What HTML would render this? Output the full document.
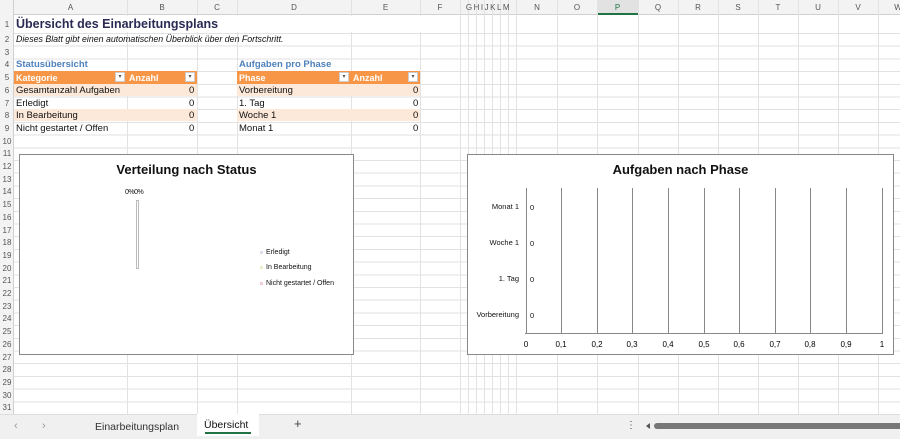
<!DOCTYPE html><html><head><meta charset="utf-8"><style>
*{margin:0;padding:0;box-sizing:border-box}
body{width:900px;height:439px;overflow:hidden;background:#fff;font-family:"Liberation Sans",sans-serif;position:relative}
.a{position:absolute}
.vl{position:absolute;top:0;width:1px;height:414px;background:#e2e2e2}
.ch{position:absolute;top:0;height:15px;font-size:8px;color:#555;text-align:center;line-height:16px}
.rh{position:absolute;left:0;width:14px;font-size:8px;color:#555;text-align:center;line-height:13px}
.c{position:absolute;font-size:9.5px;line-height:12px;white-space:nowrap;color:#111}
.fb{position:absolute;width:10px;height:10px;background:#fff;border:1px solid #ccc;font-size:6px;text-align:center;line-height:8px;color:#555}
.gl{position:absolute;top:188px;width:1px;height:145px;background:#888}
.xl{position:absolute;top:340px;font-size:8px;width:20px;text-align:center;margin-left:-10px}
</style></head><body>
<div class="a" style="left:0;top:33px;width:900px;height:381px;background:repeating-linear-gradient(to bottom,#e2e2e2 0,#e2e2e2 1px,transparent 1px,transparent 12.7px)"></div>
<div class="a" style="left:0;top:0;width:900px;height:15px;background:#f3f3f3;border-bottom:1px solid #d0d0d0"></div>
<div class="a" style="left:0;top:0;width:14px;height:414px;background:#f3f3f3;border-right:1px solid #d0d0d0"></div>
<div class="a" style="left:597px;top:0;width:41px;height:15px;background:#e2e2e2;border-bottom:2px solid #217346"></div>
<div class="vl" style="left:127px"></div><div class="vl" style="left:197px"></div><div class="vl" style="left:237px"></div><div class="vl" style="left:351px"></div><div class="vl" style="left:420px"></div><div class="vl" style="left:460px"></div><div class="vl" style="left:468px"></div><div class="vl" style="left:476px"></div><div class="vl" style="left:484px"></div><div class="vl" style="left:492px"></div><div class="vl" style="left:500px"></div><div class="vl" style="left:508px"></div><div class="vl" style="left:516px"></div><div class="vl" style="left:557px"></div><div class="vl" style="left:597px"></div><div class="vl" style="left:638px"></div><div class="vl" style="left:678px"></div><div class="vl" style="left:718px"></div><div class="vl" style="left:758px"></div><div class="vl" style="left:798px"></div><div class="vl" style="left:838px"></div><div class="vl" style="left:878px"></div>
<div class="ch" style="left:14px;width:113px">A</div><div class="ch" style="left:127px;width:70px">B</div><div class="ch" style="left:197px;width:40px">C</div><div class="ch" style="left:237px;width:114px">D</div><div class="ch" style="left:351px;width:69px">E</div><div class="ch" style="left:420px;width:40px">F</div>
<div class="ch" style="left:460px;width:57px;letter-spacing:1.5px">GHIJKLM</div><div class="ch" style="left:517px;width:40px">N</div><div class="ch" style="left:557px;width:40px">O</div><div class="ch" style="left:597px;width:41px;color:#217346">P</div><div class="ch" style="left:638px;width:40px">Q</div><div class="ch" style="left:678px;width:40px">R</div><div class="ch" style="left:718px;width:40px">S</div><div class="ch" style="left:758px;width:40px">T</div><div class="ch" style="left:798px;width:40px">U</div><div class="ch" style="left:838px;width:40px">V</div><div class="ch" style="left:878px;width:40px">W</div>
<div class="rh" style="top:18px">1</div>
<div class="rh" style="top:33px">2</div><div class="rh" style="top:45.7px">3</div><div class="rh" style="top:58.4px">4</div><div class="rh" style="top:71.1px">5</div><div class="rh" style="top:83.8px">6</div><div class="rh" style="top:96.5px">7</div><div class="rh" style="top:109.2px">8</div><div class="rh" style="top:121.9px">9</div><div class="rh" style="top:134.6px">10</div><div class="rh" style="top:147.3px">11</div><div class="rh" style="top:160px">12</div><div class="rh" style="top:172.7px">13</div><div class="rh" style="top:185.4px">14</div><div class="rh" style="top:198.1px">15</div><div class="rh" style="top:210.8px">16</div><div class="rh" style="top:223.5px">17</div><div class="rh" style="top:236.2px">18</div><div class="rh" style="top:248.9px">19</div><div class="rh" style="top:261.6px">20</div><div class="rh" style="top:274.3px">21</div><div class="rh" style="top:287px">22</div><div class="rh" style="top:299.7px">23</div><div class="rh" style="top:312.4px">24</div><div class="rh" style="top:325.1px">25</div><div class="rh" style="top:337.8px">26</div><div class="rh" style="top:350.5px">27</div><div class="rh" style="top:363.2px">28</div><div class="rh" style="top:375.9px">29</div><div class="rh" style="top:388.6px">30</div><div class="rh" style="top:401.3px">31</div>
<div class="a" style="left:15px;top:16px;width:440px;height:16px;background:#fff"></div>
<div class="c" style="left:16px;top:16px;font-size:12.5px;line-height:17px;font-weight:bold;color:#2a2a55">Übersicht des Einarbeitungsplans</div>
<div class="c" style="left:16px;top:33px;font-style:italic;font-size:8.8px">Dieses Blatt gibt einen automatischen Überblick über den Fortschritt.</div>
<div class="c" style="left:16px;top:59px;font-weight:bold;color:#4f81bd">Statusübersicht</div>
<div class="c" style="left:239px;top:59px;font-weight:bold;color:#4f81bd">Aufgaben pro Phase</div>
<div class="a" style="left:14px;top:71px;width:183px;height:13px;background:#f79646"></div>
<div class="a" style="left:237px;top:71px;width:183px;height:13px;background:#f79646"></div>
<div class="a" style="left:14px;top:84px;width:183px;height:12px;background:#fde9d9"></div>
<div class="a" style="left:237px;top:84px;width:183px;height:12px;background:#fde9d9"></div>
<div class="a" style="left:14px;top:109px;width:183px;height:12px;background:#fde9d9"></div>
<div class="a" style="left:237px;top:109px;width:183px;height:12px;background:#fde9d9"></div>
<div class="c" style="left:16px;top:72px;color:#fff;font-weight:bold;font-size:9px">Kategorie</div><div class="fb" style="left:115px;top:72px">▾</div>
<div class="c" style="left:129px;top:72px;color:#fff;font-weight:bold;font-size:9px">Anzahl</div><div class="fb" style="left:185px;top:72px">▾</div>
<div class="c" style="left:239px;top:72px;color:#fff;font-weight:bold;font-size:9px">Phase</div><div class="fb" style="left:339px;top:72px">▾</div>
<div class="c" style="left:353px;top:72px;color:#fff;font-weight:bold;font-size:9px">Anzahl</div><div class="fb" style="left:408px;top:72px">▾</div>
<div class="c" style="left:16px;top:85px">Gesamtanzahl Aufgaben</div><div class="c" style="left:189px;top:85px">0</div>
<div class="c" style="left:16px;top:97.5px">Erledigt</div><div class="c" style="left:189px;top:97.5px">0</div>
<div class="c" style="left:16px;top:110px">In Bearbeitung</div><div class="c" style="left:189px;top:110px">0</div>
<div class="c" style="left:16px;top:123px">Nicht gestartet / Offen</div><div class="c" style="left:189px;top:123px">0</div>
<div class="c" style="left:239px;top:85px">Vorbereitung</div><div class="c" style="left:413px;top:85px">0</div>
<div class="c" style="left:239px;top:97.5px">1. Tag</div><div class="c" style="left:413px;top:97.5px">0</div>
<div class="c" style="left:239px;top:110px">Woche 1</div><div class="c" style="left:413px;top:110px">0</div>
<div class="c" style="left:239px;top:123px">Monat 1</div><div class="c" style="left:413px;top:123px">0</div>
<div class="a" style="left:19px;top:154px;width:335px;height:201px;background:#fff;border:1px solid #888"></div>
<div class="c" style="left:19px;top:161px;width:335px;text-align:center;font-size:13px;font-weight:bold;line-height:17px">Verteilung nach Status</div>
<div class="c" style="left:125px;top:187px;font-size:7px;letter-spacing:-0.5px">0%0%</div>
<div class="a" style="left:136px;top:200px;width:3px;height:69px;border:1px solid #bbb"></div>
<div class="a" style="left:260px;top:251px;width:3px;height:3px;background:#dde"></div><div class="c" style="left:266px;top:247px;font-size:7px">Erledigt</div>
<div class="a" style="left:260px;top:266px;width:3px;height:3px;background:#eec"></div><div class="c" style="left:266px;top:262px;font-size:7px">In Bearbeitung</div>
<div class="a" style="left:260px;top:282px;width:3px;height:3px;background:#ecd"></div><div class="c" style="left:266px;top:278px;font-size:7px">Nicht gestartet / Offen</div>
<div class="a" style="left:467px;top:154px;width:427px;height:201px;background:#fff;border:1px solid #888"></div>
<div class="c" style="left:467px;top:161px;width:427px;text-align:center;font-size:13px;font-weight:bold;line-height:17px">Aufgaben nach Phase</div>
<div class="gl" style="left:525.5px"></div><div class="gl" style="left:561px"></div><div class="gl" style="left:597px"></div><div class="gl" style="left:632px"></div><div class="gl" style="left:668px"></div><div class="gl" style="left:704px"></div><div class="gl" style="left:739px"></div><div class="gl" style="left:775px"></div><div class="gl" style="left:810px"></div><div class="gl" style="left:846px"></div><div class="gl" style="left:882px"></div>
<div class="a" style="left:525px;top:333px;width:358px;height:1px;background:#888"></div>
<div class="xl" style="left:526px">0</div><div class="xl" style="left:561px">0,1</div><div class="xl" style="left:597px">0,2</div><div class="xl" style="left:632px">0,3</div><div class="xl" style="left:668px">0,4</div><div class="xl" style="left:704px">0,5</div><div class="xl" style="left:739px">0,6</div><div class="xl" style="left:775px">0,7</div><div class="xl" style="left:810px">0,8</div><div class="xl" style="left:846px">0,9</div><div class="xl" style="left:882px">1</div>
<div class="c" style="left:467px;top:201px;width:52px;text-align:right;font-size:7.5px">Monat 1</div><div class="c" style="left:530px;top:202px;font-size:7.5px">0</div>
<div class="c" style="left:467px;top:237px;width:52px;text-align:right;font-size:7.5px">Woche 1</div><div class="c" style="left:530px;top:238px;font-size:7.5px">0</div>
<div class="c" style="left:467px;top:273px;width:52px;text-align:right;font-size:7.5px">1. Tag</div><div class="c" style="left:530px;top:274px;font-size:7.5px">0</div>
<div class="c" style="left:467px;top:309px;width:52px;text-align:right;font-size:7.5px">Vorbereitung</div><div class="c" style="left:530px;top:310px;font-size:7.5px">0</div>
<div class="a" style="left:0;top:414px;width:900px;height:25px;background:#f0f0f0;border-top:1px solid #ddd"></div>
<div class="c" style="left:14px;top:420px;color:#999;font-size:11px">‹</div><div class="c" style="left:42px;top:420px;color:#999;font-size:11px">›</div>
<div class="c" style="left:95px;top:421px;font-size:10.5px;color:#333">Einarbeitungsplan</div>
<div class="a" style="left:197px;top:414px;width:62px;height:22px;background:#fff"></div>
<div class="c" style="left:204px;top:419px;font-size:10.5px;color:#111">Übersicht</div>
<div class="a" style="left:205px;top:432px;width:46px;height:2px;background:#217346"></div>
<div class="c" style="left:294px;top:418px;font-size:13px;color:#444">+</div>
<div class="c" style="left:626px;top:420px;font-size:10px;color:#444">⋮</div>
<div class="a" style="left:646px;top:423px;width:0;height:0;border-top:3px solid transparent;border-bottom:3px solid transparent;border-right:4px solid #555"></div>
<div class="a" style="left:654px;top:423px;width:246px;height:6px;background:#777;border-radius:3px 0 0 3px"></div>
</body></html>
